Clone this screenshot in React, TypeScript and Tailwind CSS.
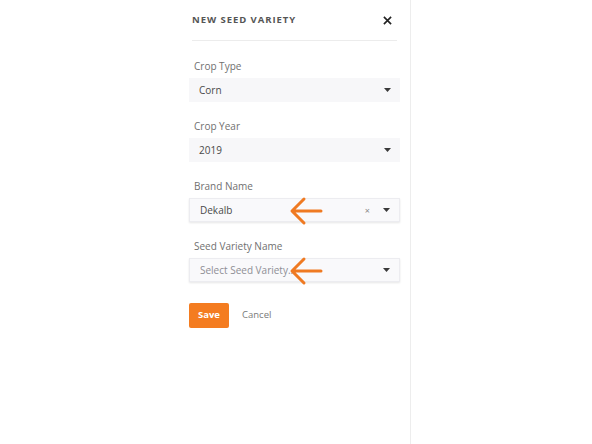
import React from "react";

const Caret = () => (
  <svg width="7" height="4" viewBox="0 0 7 4" className="block">
    <path d="M0 0 L7 0 L3.5 4 Z" fill="#3a3a3a" />
  </svg>
);

const Arrow = () => (
  <svg width="36" height="30" viewBox="0 0 36 30" className="absolute" style={{ left: 98, top: -3 }}>
    <path d="M33 15 L5 15 M16 3 L4 15 L16 27" stroke="#ef7a22" strokeWidth="3" fill="none" strokeLinecap="round" strokeLinejoin="round" />
  </svg>
);

function Field({
  label,
  value,
  placeholder,
  clear,
  arrow,
  bordered,
}: {
  label: string;
  value?: string;
  placeholder?: string;
  clear?: boolean;
  arrow?: boolean;
  bordered?: boolean;
}) {
  return (
    <div className="flex flex-col">
      <div className="pl-[5px] text-[10px] text-[#707070] h-[14px] leading-[14px]">{label}</div>
      <div
        className={
          "relative mt-[5px] h-[24px] flex items-center pl-[10px] pr-[9px] " +
          (bordered
            ? "bg-[#f9f9fb] border border-[#ececf0] shadow-[0_1px_2px_rgba(0,0,0,0.10)]"
            : "bg-[#f7f7f9]")
        }
      >
        <span className={"text-[10px] flex-1 " + (value ? "text-[#4a4a4a]" : "text-[#8e8e95]")}>
          {value ?? placeholder}
        </span>
        {clear && <span className="text-[9px] text-[#888] mr-[13px] leading-none">×</span>}
        <Caret />
        {arrow && <Arrow />}
      </div>
    </div>
  );
}

export default function App() {
  return (
    <div className="w-[592px] h-[444px] bg-white flex" style={{ fontFamily: '"Open Sans", "Noto Sans", sans-serif' }}>
      <div className="ml-[189px] w-[222px] h-[444px] border-r border-[#ededed] pr-[10px] flex flex-col">
        <div className="flex items-center justify-between h-[40px] pl-[3px] pr-[8px] pt-[1px]">
          <span className="text-[9.5px] font-bold tracking-[0.1em] text-[#555]">NEW SEED VARIETY</span>
          <svg width="9" height="9" viewBox="0 0 10 10">
            <path d="M1 1 L9 9 M9 1 L1 9" stroke="#222" strokeWidth="1.8" />
          </svg>
        </div>
        <div className="ml-[3px] mr-[3px] h-px bg-[#ececec]" />
        <div className="flex flex-col gap-[17px] mt-[18px]">
          <Field label="Crop Type" value="Corn" />
          <Field label="Crop Year" value="2019" />
          <Field label="Brand Name" value="Dekalb" clear arrow bordered />
          <Field label="Seed Variety Name" placeholder="Select Seed Variety..." arrow bordered />
        </div>
        <div className="flex items-center mt-[21px]">
          <button className="w-[40px] h-[25px] bg-[#f47c20] rounded-[2px] text-white text-[9.5px] font-bold">Save</button>
          <span className="ml-[13px] text-[9.5px] text-[#7a7a7a]">Cancel</span>
        </div>
      </div>
    </div>
  );
}
